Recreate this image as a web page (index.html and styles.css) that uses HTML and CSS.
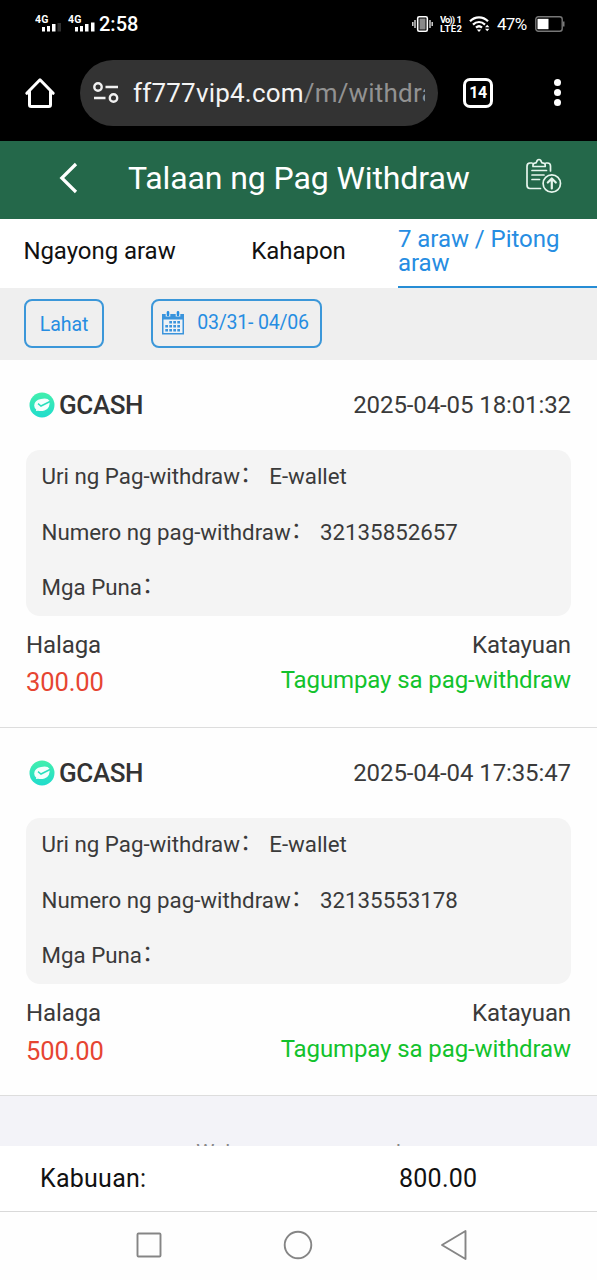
FILE: index.html
```html
<!DOCTYPE html>
<html lang="fil">
<head>
<meta charset="utf-8">
<title>Talaan ng Pag Withdraw</title>
<link rel="stylesheet" href="styles.css">
</head>
<body>
<div class="screen">
  <header class="statusbar">
    <svg class="signals" width="62" height="24" viewBox="0 0 62 24">
      <g class="net"><text x="0" y="9.500" textLength="13.500">4G</text><text x="33" y="9.500" textLength="13.500">4G</text></g>
      <g fill="#fff">
        <rect x="7" y="14" width="3" height="4.500"/><rect x="12" y="13" width="3" height="5.500"/><rect x="17" y="11" width="3.500" height="7.500"/><rect x="22.500" y="10" width="3.500" height="8.500" fill="#303030"/>
        <rect x="40" y="14" width="3" height="4.500"/><rect x="45" y="13" width="3" height="5.500"/><rect x="50" y="11" width="3.500" height="7.500"/><rect x="56" y="9.500" width="3.500" height="9"/>
      </g>
    </svg>
    <span class="clock">2:58</span>
    <span class="spacer"></span>
    <svg width="21" height="18" viewBox="0 0 21 18" fill="none" stroke="#ddd">
      <rect x="5.700" y="1.700" width="9.600" height="14.600" rx="1.500" stroke="#fff" stroke-width="1.600" fill="#000"/>
      <rect x="7.500" y="3.500" width="6" height="11" fill="#8a8a8a" stroke="none"/>
      <path d="M3 5v8M18 5v8M.8 7v4M20.200 7v4" stroke-width="1.400"/>
    </svg>
    <svg class="volte" width="23" height="18" viewBox="0 0 23 18"><text x="0" y="8" textLength="15">Vo))</text><text x="16.500" y="8">1</text><text x="0" y="17" textLength="22">LTE2</text></svg>
    <svg class="wifi" width="22" height="18" viewBox="0 0 22 18" fill="none" stroke="#fff" stroke-width="2.200">
      <path d="M1 6.300C6 1 14 1 19 6.300M4 9.600c3.500-3.500 8.500-3.500 12 0M7 12.600c2-1.800 4-1.800 6 0"/>
      <path d="M7.800 14.500h4.400L10 17z" fill="#fff" stroke="none"/>
      <path d="M16 12.200l2.200-2.400 2.200 2.400zM16 13.800l2.200 2.400 2.200-2.400z" fill="#fff" stroke="none"/>
    </svg>
    <span class="percent">47%</span>
    <svg width="30" height="16" viewBox="0 0 30 16"><rect x=".8" y=".8" width="26.400" height="14.400" rx="2.500" fill="none" stroke="#777" stroke-width="1.400"/><rect x="2.500" y="2.800" width="11" height="10.400" fill="#fff"/><path d="M28.700 5.500v5" stroke="#777" stroke-width="1.600"/></svg>
  </header>

  <div class="browserbar">
    <svg class="home" width="32" height="32" viewBox="0 0 32 32" fill="none" stroke="#fff" stroke-width="3" stroke-linecap="round" stroke-linejoin="round"><path d="M2.800 16.300 16 2.800l13.200 13.500M5.500 14.500v13.200q0 1.800 1.800 1.800h17.400q1.800 0 1.800-1.800V14.500"/></svg>
    <div class="address">
      <svg width="26" height="22" viewBox="0 0 26 22" fill="none" stroke="#f1f1f1" stroke-width="2.400"><circle cx="5" cy="5" r="3.700"/><path d="M12.500 5H25M1 16h11.500"/><circle cx="20.500" cy="16" r="3.700"/></svg>
      <div class="url">ff777vip4.com<span>/m/withdraw</span></div>
    </div>
    <div class="tabcount">14</div>
    <div class="more"><i></i><i></i><i></i></div>
  </div>

  <div class="titlebar">
    <svg class="back" width="20" height="32" viewBox="0 0 20 32" fill="none" stroke="#fff" stroke-width="3.200"><path d="M18 2 3.800 16 18 30"/></svg>
    <h1>Talaan ng Pag Withdraw</h1>
    <svg class="record" width="38" height="36" viewBox="0 0 38 36" fill="none" stroke="#e6f5ed" stroke-width="1.700" stroke-linecap="round" stroke-linejoin="round">
      <path d="M8 5H6Q3 5 3 8.500v18.500Q3 30.500 6 30.500h10.500M22 5h1.500Q26.500 5 26.500 8v5M9 8.500V7Q9 5.300 11 5.200q1.500 0 1.700-1.500Q13.200 1.500 15 1.500t2.300 2.200Q17.500 5.200 19.200 5.200q2 0 2 1.800v1.500zM8 12.500h14.500M8 17h12M8 21.500h7.500"/>
      <circle cx="27.800" cy="25.500" r="8.700"/><path d="M27.800 30.500v-9.500M23.800 24.500l4-4 4 4" stroke-width="2.200"/>
    </svg>
  </div>

  <nav class="tabs">
    <div class="tab"><span>Ngayong araw</span></div>
    <div class="tab"><span>Kahapon</span></div>
    <div class="tab active"><span>7 araw / Pitong araw</span></div>
  </nav>

  <div class="filters">
    <div class="chip all">Lahat</div>
    <div class="chip range">
      <svg width="22" height="24" viewBox="0 0 22 24"><path d="M0 3h22v20.500H0z" fill="#3b94dc"/><path d="M1.500 8.500h19v13.500h-19z" fill="#eef2f6"/><path d="M3.700 0h4.600v5.500H3.700zM13.700 0h4.600v5.500h-4.600z" fill="#efefef"/><path d="M6 1.300v2.700M16 1.300v2.700" stroke="#268de2" stroke-width="2.600" stroke-linecap="round"/><g fill="#3b94dc"><path d="M7.300 10h2.700v2.600H7.300zM11.300 10H14v2.600h-2.700zM15.300 10H18v2.600h-2.700zM3.300 14H6v2.600H3.300zM7.300 14H10v2.600H7.300zM11.300 14H14v2.600h-2.700zM15.300 14H18v2.600h-2.700zM3.300 18H6v2.600H3.300zM7.300 18H10v2.600H7.300zM11.300 18H14v2.600h-2.700zM15.300 18H18v2.600h-2.700z"/></g></svg>
      <span>03/31- 04/06</span>
    </div>
  </div>

  <main class="list">
    <article class="card">
      <div class="head"><svg class="logo" width="26" height="26" viewBox="0 0 26 26"><defs><linearGradient id="mint" x2="0" y2="1"><stop stop-color="#42efac"/><stop offset="1" stop-color="#20dccd"/></linearGradient></defs><circle cx="13" cy="13" r="12.500" fill="url(#mint)"/><path d="M5.200 13.500Q5.500 8 12 7q6.500-1.500 8.500 1.700 1 7.800-5 9.800-3.500 1-6.500.2l-2 .3.200-1.500Q5.200 16 5.200 13.500z" fill="#f4fffd"/><path d="m9 11.700 3 2.300 9-4.500" fill="none" stroke="#29dfbd" stroke-width="1.500"/></svg><strong>GCASH</strong><time>2025-04-05 18:01:32</time></div>
      <div class="details">
        <p><span>Uri ng Pag-withdraw<i>：</i></span><b>E-wallet</b></p>
        <p><span>Numero ng pag-withdraw<i>：</i></span><b>32135852657</b></p>
        <p><span>Mga Puna<i>：</i></span></p>
      </div>
      <div class="labels"><span>Halaga</span><span>Katayuan</span></div>
      <div class="values"><span class="amount">300.00</span><span class="ok">Tagumpay sa pag-withdraw</span></div>
    </article>
    <article class="card">
      <div class="head"><svg class="logo" width="26" height="26" viewBox="0 0 26 26"><circle cx="13" cy="13" r="12.500" fill="url(#mint)"/><path d="M5.200 13.500Q5.500 8 12 7q6.500-1.500 8.500 1.700 1 7.800-5 9.800-3.500 1-6.500.2l-2 .3.200-1.500Q5.200 16 5.200 13.500z" fill="#f4fffd"/><path d="m9 11.700 3 2.300 9-4.500" fill="none" stroke="#29dfbd" stroke-width="1.500"/></svg><strong>GCASH</strong><time>2025-04-04 17:35:47</time></div>
      <div class="details">
        <p><span>Uri ng Pag-withdraw<i>：</i></span><b>E-wallet</b></p>
        <p><span>Numero ng pag-withdraw<i>：</i></span><b>32135553178</b></p>
        <p><span>Mga Puna<i>：</i></span></p>
      </div>
      <div class="labels"><span>Halaga</span><span>Katayuan</span></div>
      <div class="values"><span class="amount">500.00</span><span class="ok">Tagumpay sa pag-withdraw</span></div>
    </article>
    <div class="end">Wala nang mga record</div>
  </main>

  <footer class="total"><span>Kabuuan:</span><span>800.00</span></footer>
  <div class="navkeys">
    <svg width="28" height="28" viewBox="0 0 28 28"><rect x="2.500" y="2.500" width="23" height="23" rx="1"/></svg>
    <svg width="30" height="30" viewBox="0 0 30 30"><circle cx="15" cy="15" r="13.300"/></svg>
    <svg width="28" height="32" viewBox="0 0 28 32"><path d="M2 16 25.500 2v28z" stroke-linejoin="round"/></svg>
  </div>
</div>
</body>
</html>
```

FILE: styles.css
```css
* { box-sizing: border-box; margin: 0; padding: 0; }
body { font-family: Roboto, "Noto Sans CJK SC", sans-serif; color: #3a3a3a; background: #fefefe; }
.screen { width: 597px; height: 1280px; display: flex; flex-direction: column; overflow: hidden; }
.screen > * { flex: none; }
svg { display: block; flex: none; }

.statusbar { height: 47px; background: #000; color: #fff; display: flex; align-items: center; padding: 0 32px 0 35px; }
.signals { margin-top: 3px; }
.net { fill: #fff; font-size: 10.5px; font-weight: 700; }
.clock { font-size: 20px; font-weight: 500; margin-left: 2px; }
.spacer { flex: 1; }
.volte { margin-left: 7px; fill: #fff; font-size: 9.500px; font-weight: 700; }
.wifi { margin-left: 6px; }
.percent { font-size: 17px; margin: 0 7px 0 6px; width: 31px; letter-spacing: -.7px; }

.browserbar { height: 94px; background: #000; display: flex; align-items: flex-start; padding: 13px 35px 0 24px; }
.home { margin-top: 17px; }
.address { width: 358px; height: 66px; margin-left: 24px; border-radius: 33px; background: #333; display: flex; align-items: center; padding: 0 13px; gap: 14px; }
.url { width: 292px; overflow: hidden; white-space: nowrap; color: #f4f4f4; font-size: 26px; letter-spacing: .2px; line-height: 36px; }
.url span { color: #929292; }
.tabcount { width: 30px; height: 30px; border: 3px solid #fff; border-radius: 7px; margin: 18px 0 0 25px; color: #fff; font-size: 16px; font-weight: 700; letter-spacing: -.5px; line-height: 24px; text-align: center; }
.more { margin: 19px 0 0 61px; display: grid; gap: 3px; }
.more i { width: 7px; height: 7px; border-radius: 50%; background: #fff; }

.titlebar { height: 78px; background: #24684a; color: #fff; display: flex; align-items: center; padding: 0 35px 5px 58px; }
.back { margin-right: 50px; }
.titlebar h1 { font-size: 32px; font-weight: 400; flex: 1; white-space: nowrap; letter-spacing: -.1px; }
.record { margin-top: -4px; }

.tabs { height: 69px; background: #fff; color: #111; display: grid; grid-template-columns: repeat(3, 199px); font-size: 24px; line-height: 24px; letter-spacing: -.05px; }
.tab { display: flex; align-items: center; justify-content: center; padding-bottom: 5px; border-bottom: 1px solid #d4d4d4; }
.tab.active { color: #268de2; border-bottom: 3px solid #268dd5; align-items: flex-start; padding-top: 8px; height: 70px; }

.filters { height: 72px; background: #efefef; display: flex; gap: 47px; padding: 11px 24px 0; color: #268de2; }
.chip { height: 49px; border: 2px solid #3b97d9; border-radius: 8px; font-size: 19.500px; letter-spacing: -.1px; display: flex; align-items: center; justify-content: center; }
.all { width: 80px; padding-top: 1px; }
.range { width: 171px; padding: 0 2px 2px 0; gap: 13px; }
.range span { letter-spacing: -.2px; }

.list { height: 786px; overflow: hidden; background: #f3f3f8; }
.card { height: 368px; background: #fefefe; border-bottom: 1px solid #ddd; padding: 0 26px; }
.head { height: 90px; display: flex; align-items: center; padding-left: 3px; }
.head strong { font-size: 26px; font-weight: 500; color: #333; margin-left: 4px; letter-spacing: -.4px; }
.head time { margin-left: auto; font-size: 24px; letter-spacing: -.1px; }
.details { height: 166px; background: #f4f4f4; border-radius: 14px; padding: 0 15.500px; display: grid; grid-template-rows: repeat(3, 55.7px); font-size: 22.300px; }
.details p { display: flex; align-items: baseline; white-space: nowrap; line-height: 32px; padding-top: 10px; gap: 7px; }
.details i { font-style: normal; line-height: 1; vertical-align: 2px; }
.details b { font-weight: 400; }
.labels, .values { display: flex; justify-content: space-between; font-size: 24px; letter-spacing: -.1px; }
.labels { height: 34px; margin-top: 12px; line-height: 34px; }
.values { height: 38px; line-height: 36px; }
.card + .card .values { padding-top: 1px; }
.amount { color: #e64531; font-size: 25.500px; line-height: 40px; }
.ok { color: #12c22c; }
.end { text-align: center; font-size: 20.500px; line-height: 30px; padding-top: 41px; color: #888; }

.total { height: 65px; background: #fff; color: #111; font-size: 25px; letter-spacing: .25px; display: flex; align-items: center; padding: 0 40px; }
.total span:first-child { width: 359px; }
.navkeys { height: 69px; border-top: 1px solid #d9d9d9; background: #fefefe; display: flex; align-items: center; padding: 0 0 2px 135px; }
.navkeys svg { fill: none; stroke: #858585; stroke-width: 1.900; }
.navkeys svg + svg { margin-left: 120px; }
.navkeys svg:last-child { margin-left: 127px; }
```
